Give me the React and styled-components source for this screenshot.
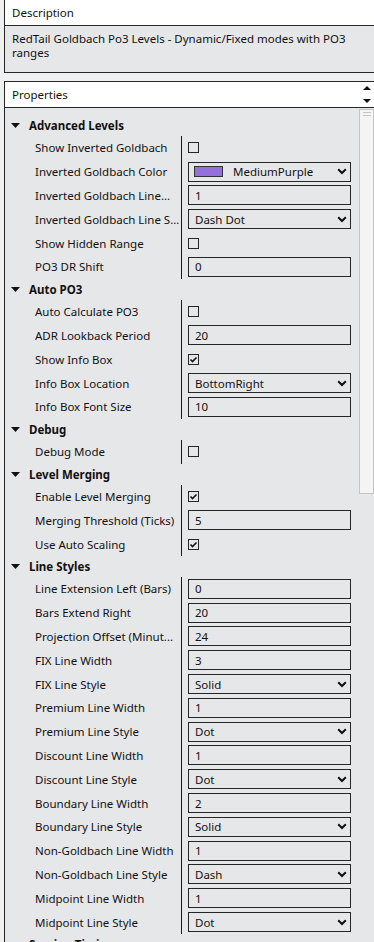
import styled, { createGlobalStyle } from "styled-components";

const GlobalStyle = createGlobalStyle`
  html, body {
    margin: 0;
    padding: 0;
    height: 100%;
  }
  body {
    background: #f0f0f0;
    font-family: "Noto Sans", "Open Sans", sans-serif;
    font-size: 11.5px;
    color: #000;
    overflow: hidden;
  }
  #root {
    height: 100%;
  }
`;

const GREY = "#e6e7e9";

const groups = [
  {
    name: "Advanced Levels",
    items: [
      { label: "Show Inverted Goldbach", type: "check", value: false },
      { label: "Inverted Goldbach Color", type: "color", value: "MediumPurple", color: "#9370db" },
      { label: "Inverted Goldbach Line...", type: "text", value: "1" },
      { label: "Inverted Goldbach Line S...", type: "combo", value: "Dash Dot" },
      { label: "Show Hidden Range", type: "check", value: false },
      { label: "PO3 DR Shift", type: "text", value: "0" },
    ],
  },
  {
    name: "Auto PO3",
    items: [
      { label: "Auto Calculate PO3", type: "check", value: false },
      { label: "ADR Lookback Period", type: "text", value: "20" },
      { label: "Show Info Box", type: "check", value: true },
      { label: "Info Box Location", type: "combo", value: "BottomRight" },
      { label: "Info Box Font Size", type: "text", value: "10" },
    ],
  },
  {
    name: "Debug",
    items: [{ label: "Debug Mode", type: "check", value: false }],
  },
  {
    name: "Level Merging",
    items: [
      { label: "Enable Level Merging", type: "check", value: true },
      { label: "Merging Threshold (Ticks)", type: "text", value: "5" },
      { label: "Use Auto Scaling", type: "check", value: true },
    ],
  },
  {
    name: "Line Styles",
    items: [
      { label: "Line Extension Left (Bars)", type: "text", value: "0" },
      { label: "Bars Extend Right", type: "text", value: "20" },
      { label: "Projection Offset (Minut...", type: "text", value: "24" },
      { label: "FIX Line Width", type: "text", value: "3" },
      { label: "FIX Line Style", type: "combo", value: "Solid" },
      { label: "Premium Line Width", type: "text", value: "1" },
      { label: "Premium Line Style", type: "combo", value: "Dot" },
      { label: "Discount Line Width", type: "text", value: "1" },
      { label: "Discount Line Style", type: "combo", value: "Dot" },
      { label: "Boundary Line Width", type: "text", value: "2" },
      { label: "Boundary Line Style", type: "combo", value: "Solid" },
      { label: "Non-Goldbach Line Width", type: "text", value: "1" },
      { label: "Non-Goldbach Line Style", type: "combo", value: "Dash" },
      { label: "Midpoint Line Width", type: "text", value: "1" },
      { label: "Midpoint Line Style", type: "combo", value: "Dot" },
    ],
  },
  { name: "Session Timing", items: [] },
];

const ValueEditor = ({ item }) => {
  if (item.type === "check") {
    return (
      <CheckBox>
        {item.value && (
          <svg width="9" height="9" viewBox="0 0 9 9">
            <polyline points="1.5,4.5 3.5,6.5 7.5,2.5" fill="none" stroke="#111" strokeWidth="1.6" />
          </svg>
        )}
      </CheckBox>
    );
  }
  if (item.type === "text") {
    return <TextBox>{item.value}</TextBox>;
  }
  return (
    <TextBox>
      {item.type === "color" && <Swatch $color={item.color} />}
      {item.value}
      <Chevron width="10" height="7" viewBox="0 0 10 7">
        <polyline points="1.2,1.2 5,5 8.8,1.2" fill="none" stroke="#111" strokeWidth="2" />
      </Chevron>
    </TextBox>
  );
};

export default function App() {
  return (
    <>
      <GlobalStyle />
      <Page>
        <DescBox>
          <BoxHeader>Description</BoxHeader>
          <DescText>RedTail Goldbach Po3 Levels - Dynamic/Fixed modes with PO3 ranges</DescText>
        </DescBox>
        <PropBox>
          <BoxHeader>
            Properties
            <ArrowCol width="16" height="26" viewBox="0 0 16 26">
              <polygon points="5,8 13,8 9,4" fill="#111" />
              <polygon points="5,17 13,17 9,21" fill="#111" />
            </ArrowCol>
          </BoxHeader>
          <PropBody>
            <Grid>
              {groups.map((g) => (
                <div key={g.name}>
                  <CategoryRow>
                    <svg width="9" height="5" viewBox="0 0 9 5">
                      <polygon points="0,0 9,0 4.5,5" fill="#111" />
                    </svg>
                    {g.name}
                  </CategoryRow>
                  {g.items.map((it) => (
                    <PropRow key={it.label}>
                      <Label>{it.label}</Label>
                      <ValueCell>
                        <ValueEditor item={it} />
                      </ValueCell>
                    </PropRow>
                  ))}
                </div>
              ))}
            </Grid>
            <ScrollTrack>
              <Thumb>
                <Grip />
                <Grip />
              </Thumb>
            </ScrollTrack>
          </PropBody>
        </PropBox>
      </Page>
    </>
  );
}

const Page = styled.div`
  height: 100vh;
  display: flex;
  flex-direction: column;
  padding-left: 4px;
  box-sizing: border-box;
`;

const DescBox = styled.section`
  border-left: 1px solid #262626;
  border-bottom: 1px solid #262626;
`;

const BoxHeader = styled.div`
  height: 25px;
  background: #fff;
  border-bottom: 1px solid #262626;
  padding-left: 7px;
  display: flex;
  align-items: center;
  color: #111;
`;

const DescText = styled.div`
  height: 46px;
  box-sizing: border-box;
  background: ${GREY};
  padding: 6px 4px 0 7px;
  line-height: 14px;
  color: #111;
`;

const PropBox = styled.section`
  margin-top: 8px;
  flex: 1;
  min-height: 0;
  display: flex;
  flex-direction: column;
  border-left: 1px solid #262626;
  border-top: 1px solid #262626;
`;

const ArrowCol = styled.svg`
  margin-left: auto;
  flex: none;
`;

const PropBody = styled.div`
  flex: 1;
  min-height: 0;
  display: flex;
  background: ${GREY};
  overflow: hidden;
`;

const Grid = styled.div`
  flex: 1;
  padding-top: 7px;
`;

const CategoryRow = styled.div`
  height: 21px;
  display: flex;
  align-items: center;
  gap: 9px;
  padding-left: 6px;
  font-weight: 700;
  color: #111;
`;

const PropRow = styled.div`
  display: grid;
  grid-template-columns: 176px 1fr;
  height: 23.8px;
`;

const Label = styled.div`
  padding: 0 3px 0 30px;
  display: flex;
  align-items: center;
  white-space: nowrap;
  overflow: hidden;
  color: #111;
`;

const ValueCell = styled.div`
  border-left: 1px solid #1a1a1a;
  padding: 0 7px 0 6px;
  display: flex;
  align-items: center;
`;

const TextBox = styled.div`
  flex: 1;
  height: 20px;
  box-sizing: border-box;
  border: 1px solid #262626;
  padding-left: 6px;
  display: flex;
  align-items: center;
  color: #111;
`;

const Swatch = styled.span`
  width: 29px;
  height: 11px;
  box-sizing: border-box;
  border: 1px solid #333;
  background: ${(p) => p.$color};
  margin: 0 10px 0 -1px;
  flex: none;
`;

const Chevron = styled.svg`
  margin-left: auto;
  margin-right: 3px;
  flex: none;
`;

const CheckBox = styled.div`
  width: 11px;
  height: 11px;
  box-sizing: border-box;
  border: 1px solid #262626;
  display: flex;
  align-items: center;
  justify-content: center;
`;

const ScrollTrack = styled.div`
  width: 16px;
  flex: none;
  padding-top: 1px;
`;

const Thumb = styled.div`
  margin-left: 1px;
  height: 385px;
  box-sizing: border-box;
  background: #f4f4f4;
  border: 1px solid #c4c4c4;
  padding-top: 2px;
  display: flex;
  flex-direction: column;
  align-items: center;
  gap: 2px;
`;

const Grip = styled.span`
  width: 8px;
  height: 1px;
  background: #c4c4c4;
`;
